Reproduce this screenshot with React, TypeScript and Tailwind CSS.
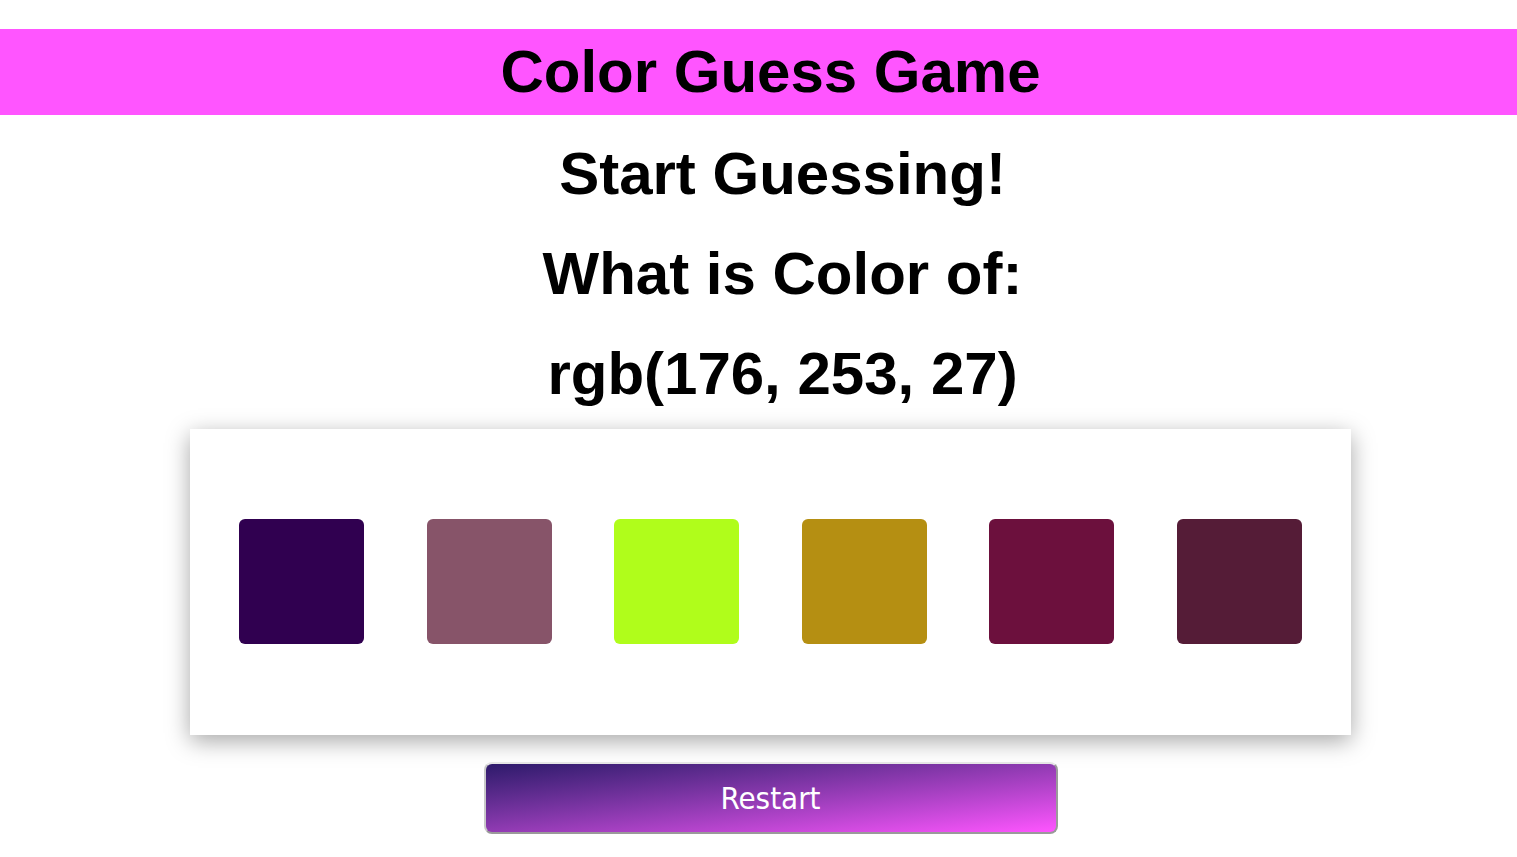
import React from "react";

const colors = ["#300050", "#875469", "#b0fd1b", "#b58f12", "#6c103d", "#551c37"];

export default function App() {
  return (
    <div className="min-h-[857px] bg-white font-['Liberation_Sans',Arial,sans-serif]">
      <div className="h-[29px]" />
      <header className="h-[86px] bg-[#ff55ff] flex items-center justify-center pl-[24px]">
        <h1 className="text-[60px] font-bold leading-none text-black">Color Guess Game</h1>
      </header>
      <div className="h-[9px]" />
      <div className="flex flex-col items-center text-[60px] font-bold leading-[100px] text-black pl-[48px]">
        <h2>Start Guessing!</h2>
        <h2>What is Color of:</h2>
        <h2>rgb(176, 253, 27)</h2>
      </div>
      <div className="flex justify-center mt-[5px] pl-[24px]">
        <div className="w-[1161px] h-[306px] bg-white shadow-[0_6px_22px_rgba(0,0,0,0.35)] flex items-start justify-between px-[49px] pt-[90px]">
          {colors.map((c) => (
            <div
              key={c}
              className="w-[125px] h-[125px] rounded-[6px]"
              style={{ backgroundColor: c }}
            />
          ))}
        </div>
      </div>
      <div className="flex justify-center mt-[27px] pl-[24px]">
        <button className="w-[574px] h-[72px] rounded-[8px] border-2 border-t-[#e6e6e6] border-l-[#c8c8c8] border-r-[#9a9a9a] border-b-[#9a9a9a] bg-gradient-to-br from-[#2e1a6b] to-[#ff55ff] text-white text-[31px] font-['DejaVu_Sans_Condensed','DejaVu_Sans',sans-serif] [font-stretch:condensed] flex items-center justify-center">
          Restart
        </button>
      </div>
    </div>
  );
}
